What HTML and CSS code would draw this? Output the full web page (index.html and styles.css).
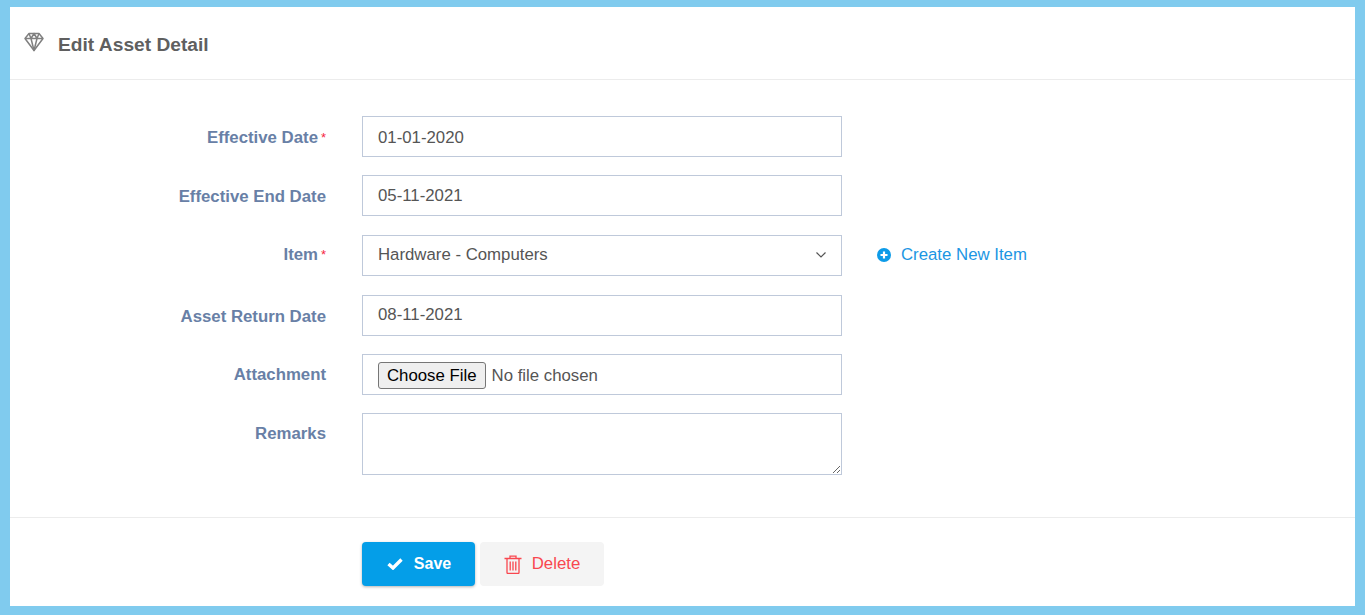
FILE: index.html
```html
<!DOCTYPE html>
<html>
<head>
	<title>Edit Asset Detail</title>
	<link rel="stylesheet" href="styles.css">
</head>
<body>
	<div class="card">
		<div class="card-header">
			<svg class="gem-icon" width="20" height="20" viewBox="0 0 20 20" fill="none" stroke="#808080" stroke-width="1.500" stroke-linejoin="round">
				<path d="M5 1.500h10l4 5L10 18.500 1 6.500z"/>
				<path d="M1 6.500h18M7 6.500l3 12 3-12M5 1.500l2 5 3-5 3 5 2-5"/>
			</svg>
			<h1>Edit Asset Detail</h1>
		</div>

		<form class="asset-form">
			<div class="form-row">
				<label>Effective Date<span class="required">*</span></label>
				<input class="field text-low" type="text" value="01-01-2020">
			</div>
			<div class="form-row">
				<label>Effective End Date</label>
				<input class="field" type="text" value="05-11-2021">
			</div>
			<div class="form-row">
				<label class="label-select">Item<span class="required">*</span></label>
				<div class="select-wrap">
					<select class="field text-high">
						<option>Hardware - Computers</option>
					</select>
					<svg class="chevron" width="10" height="6" viewBox="0 0 10 6" fill="none" stroke="#555" stroke-width="1.200">
						<path d="M.5.500 5 5 9.500.500"/>
					</svg>
				</div>
				<a class="create-link" href="#">
					<svg width="14" height="14" viewBox="0 0 14 14">
						<circle cx="7" cy="7" r="7" fill="#0d9be8"/>
						<path d="M7 3.500v7M3.500 7h7" stroke="#fff" stroke-width="2.200"/>
					</svg>
					Create New Item
				</a>
			</div>
			<div class="form-row">
				<label>Asset Return Date</label>
				<input class="field text-high" type="text" value="08-11-2021">
			</div>
			<div class="form-row">
				<label class="label-file">Attachment</label>
				<input class="field file-field" type="file">
			</div>
			<div class="form-row">
				<label class="label-file">Remarks</label>
				<textarea class="field remarks"></textarea>
			</div>
		</form>

		<div class="card-footer">
			<button class="btn btn-save" type="button">
				<svg width="16" height="12" viewBox="0 0 16 12" fill="none" stroke="#fff" stroke-width="3.400">
					<path d="M1.500 6 6 10 14.500 1.500"/>
				</svg>
				Save
			</button>
			<button class="btn btn-delete" type="button">
				<svg width="18" height="19" viewBox="0 0 18 19" fill="none" stroke="#f9474f" stroke-width="1.300">
					<path d="M.5 3.500h17M6 3.500V1.200h6v2.300M3 3.500v14a1 1 0 0 0 1 1h10a1 1 0 0 0 1-1v-14"/>
					<path d="M6.200 6.500v9M9 6.500v9M11.800 6.500v9"/>
				</svg>
				Delete
			</button>
		</div>
	</div>
</body>
</html>
```

FILE: styles.css
```css
html, body {
	height: 100%;
}
body {
	margin: 0;
	padding: 7px 10px 9px;
	box-sizing: border-box;
	background-color: #80cbee;
	font-family: "Liberation Sans", Arial, sans-serif;
	font-size: 16.800px;
	color: #555;
}
.card {
	height: 100%;
	background-color: #fff;
}
.card-header {
	display: flex;
	align-items: center;
	height: 72px;
	padding-left: 14px;
	border-bottom: 1px solid #ececec;
}
.gem-icon {
	margin-top: -3px;
}
.card-header h1 {
	margin: 4px 0 0 14px;
	font-size: 19.200px;
	font-weight: bold;
	color: #5f5f5f;
}
.asset-form {
	height: 438px;
	padding-top: 36px;
	box-sizing: border-box;
	border-bottom: 1px solid #ececec;
}
.form-row {
	display: flex;
	align-items: flex-start;
	margin-bottom: 18px;
}
.form-row:nth-child(2), .form-row:nth-child(3) {
	margin-bottom: 19px;
}
.form-row label {
	width: 316px;
	margin-right: 36px;
	padding-top: 13px;
	text-align: right;
	font-weight: bold;
	color: #6880a6;
	line-height: 18px;
}
.form-row .label-select {
	padding-top: 11px;
}
.form-row .label-file {
	padding-top: 12px;
}
.required {
	display: inline-block;
	width: 8px;
	font-size: 13px;
	font-weight: normal;
	color: #f5263f;
	text-align: right;
	vertical-align: top;
}
.field {
	display: block;
	width: 480px;
	height: 41px;
	padding: 0 15px;
	box-sizing: border-box;
	border: 1px solid #bfc9da;
	border-radius: 0;
	background-color: #fff;
	font-family: inherit;
	font-size: 16.800px;
	color: #555;
	outline: none;
}
.text-low {
	padding-top: 2px;
}
.text-high {
	padding-bottom: 2px;
}
.select-wrap {
	position: relative;
}
.select-wrap select {
	appearance: none;
}
.chevron {
	position: absolute;
	top: 17px;
	right: 16px;
}
.create-link {
	display: flex;
	align-items: center;
	gap: 10px;
	height: 39px;
	margin-left: 35px;
	color: #1c96e3;
	text-decoration: none;
}
.file-field {
	padding: 7px 15px;
}
.file-field::file-selector-button {
	height: 27px;
	padding: 0 8px;
	margin-right: 6px;
	border: 1px solid #767676;
	border-radius: 3px;
	background-color: #efefef;
	font-family: inherit;
	font-size: 16.800px;
	color: #000;
}
.remarks {
	height: 62px;
	padding: 10px 15px;
}
.card-footer {
	display: flex;
	gap: 5px;
	padding: 24px 0 0 352px;
}
.btn {
	display: flex;
	align-items: center;
	justify-content: center;
	height: 44px;
	border: none;
	border-radius: 4px;
	font-family: inherit;
	font-size: 16.800px;
}
.btn-save {
	gap: 11px;
	width: 113px;
	padding-left: 9px;
	padding-right: 8px;
	background-color: #049ee8;
	color: #fff;
	font-size: 16px;
	font-weight: bold;
	box-shadow: 0 1px 3px rgba(0, 0, 0, 0.3);
}
.btn-delete {
	gap: 10px;
	width: 124px;
	background-color: #f4f4f4;
	color: #f9474f;
}
```
